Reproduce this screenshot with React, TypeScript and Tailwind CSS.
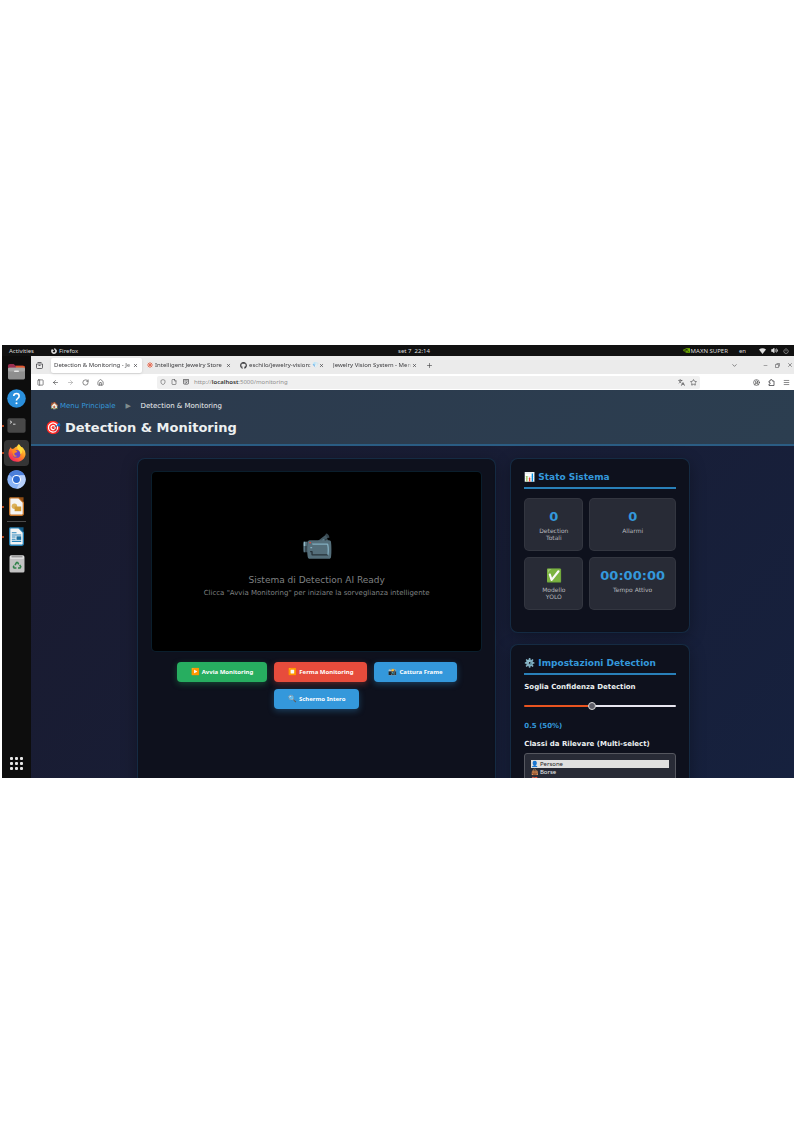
import type { ReactNode } from "react";
import {
  ArrowLeft, ArrowRight, ChevronDown, CircleUserRound, File, House, Languages, Menu, Minus,
  PanelLeft, Plus, Power, RotateCw, Shield, Star, Volume2, X,
} from "lucide-react";
import { SiFirefoxbrowser, SiNvidia } from "react-icons/si";
import { FaGithub } from "react-icons/fa";

function IconButton({ label, children, className = "" }: { label: string; children: ReactNode; className?: string }) {
  return (
    <button type="button" aria-label={label} className={`flex size-[7px] shrink-0 items-center justify-center ${className}`}>
      {children}
    </button>
  );
}

function TopBar() {
  return (
    <header className="flex h-[11px] shrink-0 items-center bg-[#111111] text-[6px] leading-none text-[#dedede]">
      <div className="flex flex-1 items-center pl-[7px]">
        <button type="button" className="w-[42px] text-left">Activities</button>
        <button type="button" className="flex items-center gap-[2px]">
          <SiFirefoxbrowser size={6} />
          Firefox
        </button>
      </div>
      <time className="w-8 whitespace-nowrap text-center">set 7&nbsp; 22:14</time>
      <div className="flex w-[364px] items-center justify-end pr-[5px]">
        <span className="flex items-center gap-px whitespace-nowrap">
          <SiNvidia size={7} className="text-[#76b900]" />
          MAXN SUPER
        </span>
        <span className="ml-[11px]">en</span>
        <svg viewBox="0 0 12 10" className="ml-[13px] h-[6px] w-[7px]" fill="currentColor"><path d="M0 2.500Q6-2 12 2.500L6 10z" /></svg>
        <Volume2 size={7} fill="currentColor" className="ml-[5px]" />
        <Power size={6} className="ml-[5px]" />
      </div>
    </header>
  );
}

function DockItem({ label, running, active, children }: { label: string; running?: boolean; active?: boolean; children: ReactNode }) {
  return (
    <button type="button" aria-label={label} className="flex h-[27px] w-full items-center">
      <span className={`size-[2px] shrink-0 rounded-full ${running ? "bg-[#e95420]" : ""}`} />
      <span className={`flex h-[26px] w-[25px] items-center justify-center rounded ${active ? "bg-[#353535]" : ""}`}>{children}</span>
    </button>
  );
}

function Dock() {
  return (
    <nav aria-label="Dock" className="flex w-[29px] shrink-0 flex-col bg-[#0d0d0d] pt-[2px] pb-[5px]">
      <DockItem label="Files">
        <svg viewBox="0 0 20 18" className="h-[17px] w-[19px]">
          <path d="M1 3q0-2 2-2h4l2 2h8q2 0 2 2v4H1z" fill="#9c2f50" />
          <path d="M9 3h8q2 0 2 2v4h-9z" fill="#e2582b" />
          <rect x="1" y="5" width="18" height="12.500" rx="1.500" fill="#8f8f8f" />
          <rect x="1" y="5" width="18" height="4" rx="1.500" fill="#a5a5a5" />
          <rect x="7.500" y="8" width="5" height="1.600" rx=".6" fill="#e8e8e8" />
        </svg>
      </DockItem>
      <DockItem label="Help">
        <svg viewBox="0 0 20 20" className="size-[19px]">
          <circle cx="10" cy="10" r="9.800" fill="#2a8fdc" />
          <path d="M7.100 7.400Q7.200 4.800 10 4.800t2.800 2.500q0 1.500-1.500 2.500T10 12.200" fill="none" stroke="#fff" strokeWidth="1.700" />
          <circle cx="10" cy="15" r="1.100" fill="#fff" />
        </svg>
      </DockItem>
      <DockItem label="Terminal" running>
        <svg viewBox="0 0 20 16" className="h-[15px] w-[19px]">
          <rect x=".3" y=".3" width="19.400" height="15.400" rx="2" fill="#484848" />
          <path d="M3 3l2 1.400L3 5.800M6.300 6.600h2.600" fill="none" stroke="#ddd" strokeWidth="1" />
        </svg>
      </DockItem>
      <DockItem label="Firefox" running active>
        <svg viewBox="0 0 20 20" className="size-[18px]">
          <defs>
            <linearGradient id="fox" x1=".85" y1=".05" x2=".2" y2=".9">
              <stop offset="0" stopColor="#ffe84a" />
              <stop offset=".45" stopColor="#ff9422" />
              <stop offset="1" stopColor="#f5275b" />
            </linearGradient>
          </defs>
          <path d="M12 .3q1.600 1 2 3 2-.3 3 1.300Q19.600 7.500 19.500 11c-.3 5-4.500 8.700-9.500 8.700S.5 15.800.5 10.500Q.6 6 3 3.500l1.300 2.100 2.200-.6Q8.500 2.500 9.500 3q1-1.500 2.500-2.700z" fill="url(#fox)" />
          <circle cx="9.500" cy="11" r="4.300" fill="#7044c8" />
          <path d="M4.800 6.500Q7 5.800 8.500 7l2 1.200Q9.500 9.700 8 9.700q-1.500.5-.8 2 .8 1.800 3 1.300-1.700 2-3.700.6-1.800-1.500-1.700-7.100z" fill="#ff8a20" />
          <path d="M12 .3q-3 3.200-.6 6 2.600 2 2.400 5.200 2.400-1.500 1.700-4.500l2 .5Q15.500 3.800 12 .3z" fill="#ffdc3e" />
        </svg>
      </DockItem>
      <DockItem label="Chromium">
        <svg viewBox="0 0 20 20" className="size-[19px]">
          <circle cx="10" cy="10" r="9.700" fill="#8ab4f8" />
          <path d="M10 .3a9.700 9.700 0 0 1 8.500 5.200H10a4.500 4.500 0 0 0-4.100 2.600L2 4.500A9.700 9.700 0 0 1 10 .3z" fill="#4c7fd9" />
          <path d="M18.500 5.500A9.700 9.700 0 0 1 10 19.700l4-7.500q1.500-3.500-1-6.700z" fill="#b7d0fa" />
          <circle cx="10" cy="10" r="4.700" fill="#fff" />
          <circle cx="10" cy="10" r="3.600" fill="#2c69cf" />
        </svg>
      </DockItem>
      <DockItem label="LibreOffice Draw" running>
        <svg viewBox="0 0 16 20" className="h-[19px] w-[15px]">
          <path d="M1.500.8h8.800l5 5v12q0 1.500-1.500 1.500H2q-1.300 0-1.300-1.500V2q0-1 .8-1.200z" fill="#f4f4f4" stroke="#c7772b" strokeWidth="1.400" />
          <path d="M10 .2h5.500v5.600z" fill="#8e4d14" />
          <circle cx="5.800" cy="9.800" r="2.900" fill="#dbb15a" />
          <rect x="6" y="10" width="7" height="5" fill="#cf9a35" />
        </svg>
      </DockItem>
      <div className="mx-[5px] my-px h-px shrink-0 bg-[#4c4c4c]" />
      <DockItem label="LibreOffice Writer" running>
        <svg viewBox="0 0 16 20" className="h-[19px] w-[15px]">
          <path d="M1.500.8h8.800l5 5v12q0 1.500-1.500 1.500H2q-1.300 0-1.300-1.500V2q0-1 .8-1.200z" fill="#f4f4f4" stroke="#2680b4" strokeWidth="1.400" />
          <path d="M10 .2h5.500v5.600z" fill="#155a85" />
          <path d="M3 6h5M3 8.300h10M3 10.600h4M3 12.900h4M3 15.200h10" stroke="#2684bb" strokeWidth="1.100" />
          <rect x="8" y="9.800" width="5" height="3.800" fill="#1b6f9f" />
        </svg>
      </DockItem>
      <DockItem label="Trash">
        <svg viewBox="0 0 16 18" className="h-[18px] w-4">
          <rect x=".5" y=".5" width="15" height="17" rx="1.500" fill="#c2c2c2" />
          <rect x="1" y=".5" width="14" height="3.500" rx="1" fill="#dddddd" />
          <path d="M2.500 1.800h11" stroke="#666" strokeWidth=".8" />
          <path d="M6 10.200l1.500-2.600h1.200l1 1.700M10.700 9.900l1.100 1.900-.7 1.200H9M7.400 13H5.100l-.7-1.100.7-1.300" fill="none" stroke="#31824a" strokeWidth="1.500" />
        </svg>
      </DockItem>
      <button type="button" aria-label="Show applications" className="mt-auto flex h-5 items-center justify-center">
        <svg viewBox="0 0 13 13" className="size-[13px]" fill="#e6e6e6">
          {[0, 5, 10].map((y) => [0, 5, 10].map((x) => <rect key={`${x}-${y}`} x={x} y={y} width="3" height="3" rx="1" />))}
        </svg>
      </button>
    </nav>
  );
}

function Tab({ title, icon, active }: { title: string; icon?: ReactNode; active?: boolean }) {
  return (
    <div className={`flex h-[15px] w-[91px] shrink-0 items-center rounded-[2px] pr-1 pl-[3px] ${active ? "bg-white shadow-sm" : ""}`}>
      {icon && <span className="mr-[2px] shrink-0">{icon}</span>}
      <span className="min-w-0 flex-1 whitespace-nowrap [mask-image:linear-gradient(to_right,black_92%,transparent)]">{title}</span>
      <IconButton label={`Close ${title}`} className="!size-[5px]"><X size={5} strokeWidth={3} /></IconButton>
    </div>
  );
}

function BrowserChrome() {
  return (
    <div className="shrink-0 text-[6px] leading-[8px] text-[#3a3a3d]">
      <div className="flex h-[18px] items-center bg-[#ebebeb]">
        <IconButton label="Firefox View" className="mr-[8px] ml-[5px]">
          <svg viewBox="0 0 14 14" className="size-[7px]" fill="none" stroke="currentColor" strokeWidth="1.500">
            <path d="M3 1h8M1 4h12v7q0 2-2 2H3q-2 0-2-2zM5 7h4" />
          </svg>
        </IconButton>
        <div className="flex gap-[2px]">
          <Tab title="Detection & Monitoring - Je" active />
          <Tab title="Intelligent Jewelry Store" icon={
            <svg viewBox="0 0 10 10" className="size-[6px] stroke-[#e66b52]" strokeWidth="1.600">
              <path d="M5 0v10M0 5h10M1.500 1.500l7 7M8.500 1.500l-7 7" />
            </svg>
          } />
          <Tab title="eschilo/jewelry-vision: 💎" icon={<FaGithub size={7} />} />
          <Tab title="Jewelry Vision System - Men" />
        </div>
        <IconButton label="New tab" className="ml-[5px]"><Plus size={7} /></IconButton>
        <div className="ml-auto flex items-center pr-px">
          <IconButton label="List tabs" className="mr-6"><ChevronDown size={7} /></IconButton>
          <IconButton label="Minimize" className="mr-[5px]"><Minus size={5} /></IconButton>
          <IconButton label="Restore" className="mr-[5px]">
            <svg viewBox="0 0 10 10" className="size-[5px]" fill="none" stroke="currentColor"><path d="M1 3h6v6H1zM3 1h6v6" /></svg>
          </IconButton>
          <IconButton label="Close window"><X size={6} /></IconButton>
        </div>
      </div>
      <div className="flex h-4 items-center bg-white pr-1 pl-[6px]">
        <div className="flex gap-2">
          <IconButton label="Sidebar"><PanelLeft size={7} /></IconButton>
          <IconButton label="Back"><ArrowLeft size={7} /></IconButton>
          <IconButton label="Forward" className="opacity-50"><ArrowRight size={7} /></IconButton>
          <IconButton label="Reload"><RotateCw size={7} /></IconButton>
          <IconButton label="Home"><House size={7} /></IconButton>
        </div>
        <div className="mr-[53px] ml-[53px] flex h-[13px] flex-1 items-center rounded-[2px] bg-[#f0f0f0] pr-[3px] pl-[3px]">
          <Shield size={6} />
          <File size={6} className="ml-[5px]" />
          <svg viewBox="0 0 14 14" className="ml-[6px] size-[6px]" fill="none" stroke="currentColor" strokeWidth="1.600">
            <path d="M1 1h12v8q0 3-3 3H4q-3 0-3-3zM3 4.500h8M4 8l2 1.500L10 7" />
          </svg>
          <a href="#monitoring" className="ml-[5px] flex-1 text-[#8f8f8f]">http://<span className="font-semibold text-[#333]">localhost</span>:5000/monitoring</a>
          <IconButton label="Translate" className="mr-[5px]"><Languages size={7} /></IconButton>
          <IconButton label="Bookmark"><Star size={7} /></IconButton>
        </div>
        <div className="flex gap-2">
          <IconButton label="Account"><CircleUserRound size={7} /></IconButton>
          <IconButton label="Extensions">
            <svg viewBox="0 0 14 14" className="size-[7px]" fill="none" stroke="currentColor" strokeWidth="1.500">
              <path d="M2 4h2.500V3Q4.500 1 6.500 1t2 2v1H12v9H2v-3h1q1.500 0 1.500-1.500T3 7H2z" />
            </svg>
          </IconButton>
          <IconButton label="Menu"><Menu size={7} /></IconButton>
        </div>
      </div>
    </div>
  );
}

function Panel({ children }: { children: ReactNode }) {
  return (
    <section className="rounded-lg border border-[#3498db]/20 bg-[#0e111d] px-[13px] py-3 shadow-[0_4px_16px_rgba(0,0,0,0.3)]">
      {children}
    </section>
  );
}

function PanelTitle({ icon, children }: { icon: string; children: ReactNode }) {
  return (
    <h2 className="flex gap-[3px] border-b-2 border-[#2980b9] pb-1 text-[9px] leading-[12px] font-bold text-[#3498db]">
      <span>{icon}</span>
      <span>{children}</span>
    </h2>
  );
}

function Stat({ value, label }: { value: string; label: string }) {
  return (
    <div className="rounded-[5px] border border-white/5 bg-[#282b36] px-[10px] py-[9px] text-center">
      <div className="text-[13px] leading-[17px] font-bold text-[#3498db]">{value}</div>
      <div className="mt-[2px] text-[6px] leading-[7px] text-[#b5b7bc]">{label}</div>
    </div>
  );
}

const buttonStyles = {
  green: "bg-[#27ae60] shadow-[0_2px_6px_rgba(39,174,96,0.35)]",
  red: "bg-[#e74c3c] shadow-[0_2px_6px_rgba(231,76,60,0.35)]",
  blue: "bg-[#3498db] shadow-[0_2px_6px_rgba(52,152,219,0.35)]",
};

function ActionButton({ icon, tone, children }: { icon: string; tone: keyof typeof buttonStyles; children: ReactNode }) {
  return (
    <button type="button" className={`flex items-center gap-[2px] rounded-[4px] px-[14px] py-[6px] font-[family-name:'Noto_Sans','Open_Sans',sans-serif] text-[6px] leading-[8px] font-bold text-white ${buttonStyles[tone]}`}>
      <span className="text-[7px] leading-[8px]">{icon}</span>
      <span>{children}</span>
    </button>
  );
}

function MonitoringPage() {
  return (
    <div className="min-h-0 flex-1 overflow-hidden bg-[linear-gradient(135deg,#1a1a2e,#16213e)] font-[family-name:'DejaVu_Sans',sans-serif]">
      <header className="border-b-2 border-[#2b5d84] bg-[linear-gradient(135deg,#2c3a4d,#2c3e50)] px-[14px] pt-3 pb-[7px] text-[#ecf0f1]">
        <nav aria-label="Breadcrumb" className="flex pl-[5px] text-[7px] leading-[9px]">
          <a href="#menu" className="flex gap-px text-[#3498db]"><span>🏠</span><span>Menu Principale</span></a>
          <span className="w-[25px] text-center text-[#7f8c8d]">▶</span>
          <span>Detection &amp; Monitoring</span>
        </nav>
        <h1 className="mt-2 flex gap-1 text-[13px] leading-[18px] font-bold"><span>🎯</span><span>Detection &amp; Monitoring</span></h1>
      </header>
      <main className="mx-auto grid max-w-[555px] grid-cols-[2fr_1fr] gap-[14px] pt-3 pl-[2px]">
        <Panel>
          <div className="flex h-[181px] flex-col items-center justify-center rounded-[5px] border border-[#3498db]/20 bg-black pt-1 text-center text-[#7f8182]">
            <div className="text-[26px] leading-[32px]">📹</div>
            <p className="mt-[13px] text-[9px] leading-[11px]">Sistema di Detection AI Ready</p>
            <p className="mt-[3px] text-[7px] leading-[9px]">Clicca "Avvia Monitoring" per iniziare la sorveglianza intelligente</p>
          </div>
          <div className="mt-[10px] flex flex-wrap justify-center gap-[7px]">
            <ActionButton icon="▶️" tone="green">Avvia Monitoring</ActionButton>
            <ActionButton icon="⏹️" tone="red">Ferma Monitoring</ActionButton>
            <ActionButton icon="📸" tone="blue">Cattura Frame</ActionButton>
            <ActionButton icon="🔍" tone="blue">Schermo Intero</ActionButton>
          </div>
        </Panel>
        <div className="flex min-w-0 flex-col gap-[11px]">
          <Panel>
            <PanelTitle icon="📊">Stato Sistema</PanelTitle>
            <div className="mt-[9px] mb-[10px] grid grid-cols-[60fr_87fr] gap-[6px]">
              <Stat value="0" label="Detection Totali" />
              <Stat value="0" label="Allarmi" />
              <Stat value="✅" label="Modello YOLO" />
              <Stat value="00:00:00" label="Tempo Attivo" />
            </div>
          </Panel>
          <Panel>
            <PanelTitle icon="⚙️">Impostazioni Detection</PanelTitle>
            <label htmlFor="threshold" className="mt-2 block text-[7px] leading-[8px] font-bold text-[#ecf0f1]">Soglia Confidenza Detection</label>
            <input id="threshold" type="range" min="0.1" max="1" step="0.05" defaultValue="0.5"
              className="mt-[10px] block h-[10px] w-full appearance-none bg-transparent [&::-webkit-slider-runnable-track]:h-[2px] [&::-webkit-slider-runnable-track]:rounded-full [&::-webkit-slider-runnable-track]:bg-[linear-gradient(to_right,#e95420_45%,#e8e6f0_45%)] [&::-webkit-slider-thumb]:-mt-[3px] [&::-webkit-slider-thumb]:size-2 [&::-webkit-slider-thumb]:appearance-none [&::-webkit-slider-thumb]:rounded-full [&::-webkit-slider-thumb]:border [&::-webkit-slider-thumb]:border-[#d8d8d8] [&::-webkit-slider-thumb]:bg-[#5e5e68]" />
            <output htmlFor="threshold" className="mt-[11px] block text-[7px] leading-[9px] font-bold text-[#3498db]">0.5 (50%)</output>
            <label htmlFor="classes" className="mt-[9px] block text-[7px] leading-[8px] font-bold text-[#ecf0f1]">Classi da Rilevare (Multi-select)</label>
            <select id="classes" multiple size={5} defaultValue={["persone"]}
              className="mt-[5px] block w-full overflow-hidden rounded-[3px] border border-[#55575f] bg-[#282b36] p-[6px] font-[family-name:'Noto_Sans','Open_Sans',sans-serif] text-[6px] leading-[8px] text-[#ecf0f1] [&_option]:h-2 [&_option]:min-h-0 [&_option]:p-0 [&_option:checked]:bg-[#e0e0e0] [&_option:checked]:bg-[linear-gradient(#e0e0e0,#e0e0e0)] [&_option:checked]:text-[#222]">
              <option value="persone">👤 Persone</option>
              <option value="borse">👜 Borse</option>
              <option value="zaini">🎒 Zaini</option>
            </select>
          </Panel>
        </div>
      </main>
    </div>
  );
}

export default function App() {
  return (
    <div className="flex min-h-screen items-center bg-white pl-[2px] font-[family-name:'Noto_Sans','Open_Sans',sans-serif]">
      <div className="flex aspect-[792/433] w-full flex-col overflow-hidden">
        <TopBar />
        <div className="flex min-h-0 flex-1">
          <Dock />
          <div className="flex min-w-0 flex-1 flex-col">
            <BrowserChrome />
            <MonitoringPage />
          </div>
        </div>
      </div>
    </div>
  );
}
